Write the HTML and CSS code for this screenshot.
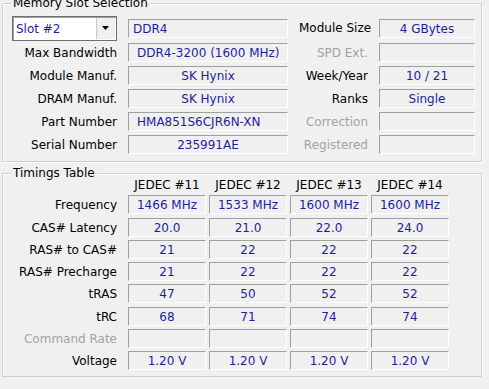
FILE: index.html
```html
<!DOCTYPE html>
<html>
<head>
<meta charset="utf-8">
<link rel="stylesheet" href="styles.css">
</head>
<body>
<div class="group slot">
  <div class="gtitle">Memory Slot Selection</div>
  <div class="sgrid">
    <div class="combo"><span class="ctext">Slot #2</span><span class="cbtn"><svg width="8" height="5" viewBox="0 0 8 5"><path d="M0 0H7L3.5 4Z" fill="#000"/></svg></span></div>
    <div class="field l1 first">DDR4</div>
    <div class="lbl">Module Size</div>
    <div class="field first">4 GBytes</div>

    <div class="lbl">Max Bandwidth</div>
    <div class="field l2">DDR4-3200 (1600 MHz)</div>
    <div class="lbl dis">SPD Ext.</div>
    <div class="field"></div>

    <div class="lbl">Module Manuf.</div>
    <div class="field">SK Hynix</div>
    <div class="lbl">Week/Year</div>
    <div class="field">10 / 21</div>

    <div class="lbl">DRAM Manuf.</div>
    <div class="field">SK Hynix</div>
    <div class="lbl">Ranks</div>
    <div class="field">Single</div>

    <div class="lbl">Part Number</div>
    <div class="field l2">HMA851S6CJR6N-XN</div>
    <div class="lbl dis">Correction</div>
    <div class="field"></div>

    <div class="lbl">Serial Number</div>
    <div class="field">235991AE</div>
    <div class="lbl dis">Registered</div>
    <div class="field"></div>
  </div>
</div>

<div class="group timings">
  <div class="gtitle">Timings Table</div>
  <div class="tgrid">
    <div></div>
    <div class="hd">JEDEC #11</div>
    <div class="hd">JEDEC #12</div>
    <div class="hd">JEDEC #13</div>
    <div class="hd">JEDEC #14</div>

    <div class="lbl">Frequency</div>
    <div class="field">1466 MHz</div>
    <div class="field">1533 MHz</div>
    <div class="field">1600 MHz</div>
    <div class="field">1600 MHz</div>

    <div class="lbl">CAS# Latency</div>
    <div class="field">20.0</div>
    <div class="field">21.0</div>
    <div class="field">22.0</div>
    <div class="field">24.0</div>

    <div class="lbl">RAS# to CAS#</div>
    <div class="field">21</div>
    <div class="field">22</div>
    <div class="field">22</div>
    <div class="field">22</div>

    <div class="lbl">RAS# Precharge</div>
    <div class="field">21</div>
    <div class="field">22</div>
    <div class="field">22</div>
    <div class="field">22</div>

    <div class="lbl">tRAS</div>
    <div class="field">47</div>
    <div class="field">50</div>
    <div class="field">52</div>
    <div class="field">52</div>

    <div class="lbl">tRC</div>
    <div class="field">68</div>
    <div class="field">71</div>
    <div class="field">74</div>
    <div class="field">74</div>

    <div class="lbl dis">Command Rate</div>
    <div class="field"></div>
    <div class="field"></div>
    <div class="field"></div>
    <div class="field"></div>

    <div class="lbl">Voltage</div>
    <div class="field">1.20 V</div>
    <div class="field">1.20 V</div>
    <div class="field">1.20 V</div>
    <div class="field">1.20 V</div>
  </div>
</div>
</body>
</html>
```
FILE: styles.css
```css
html, body {
  margin: 0;
  padding: 0;
  background: #f0f0f0;
}
body {
  font-family: "DejaVu Sans", Tahoma, sans-serif;
  font-size: 12px;
  line-height: 13px;
  color: #000;
  padding: 3px 7px 0 2px;
  width: 480px;
  overflow: hidden;
}
.group {
  position: relative;
  border: 1px solid #d0d0d0;
  box-shadow: inset 1px 1px 0 #fff, 1px 1px 0 #fff;
}
.gtitle {
  position: absolute;
  top: -7px;
  left: 8px;
  padding: 0 2px;
  background: #f0f0f0;
  white-space: nowrap;
}
.slot {
  padding: 12px 0 7px 9px;
}
.sgrid {
  display: grid;
  grid-template-columns: 105px 160px 69px 96px;
  column-gap: 11px;
  row-gap: 4px;
  align-items: center;
}
.timings {
  margin-top: 11px;
  padding: 3px 0 6px 9px;
}
.tgrid {
  display: grid;
  grid-template-columns: 113px repeat(4, 78px);
  grid-template-rows: 15px;
  column-gap: 3px;
  row-gap: 3.3px;
  align-items: center;
}
.tgrid > .lbl {
  padding-right: 8px;
}
.hd {
  text-align: center;
  white-space: nowrap;
  padding-top: 2px;
}
.lbl {
  text-align: right;
  white-space: nowrap;
  padding-top: 2px;
}
.lbl.dis {
  color: #a3a3a3;
}
.field {
  box-sizing: border-box;
  height: 19px;
  border-top: 1px solid #a0a0a0;
  border-left: 1px solid #a0a0a0;
  border-bottom: 1px solid #fff;
  border-right: 1px solid #fff;
  color: #1e1e9c;
  text-align: center;
  line-height: 19px;
  white-space: nowrap;
  overflow: hidden;
}
.field.l1 {
  text-align: left;
  padding-left: 4px;
}
.field.l2 {
  text-align: left;
  padding-left: 8px;
}
.sgrid > .field.first {
  align-self: start;
  margin-top: 3px;
}
.combo {
  box-sizing: border-box;
  height: 25px;
  margin-bottom: -2px;
  align-self: start;
  display: flex;
  align-items: stretch;
  background: #fff;
  border: 1px solid #6f6f6f;
  box-shadow: inset 1px 1px 0 #a0a0a0;
}
.ctext {
  flex: 1;
  padding-left: 3px;
  line-height: 24px;
  color: #1e1e9c;
}
.cbtn {
  width: 18px;
  margin: 1px 1px 1px 0;
  background: #f0f0f0;
  border-left: 1px solid #c8c8c8;
  display: flex;
  align-items: center;
  justify-content: center;
}
```
